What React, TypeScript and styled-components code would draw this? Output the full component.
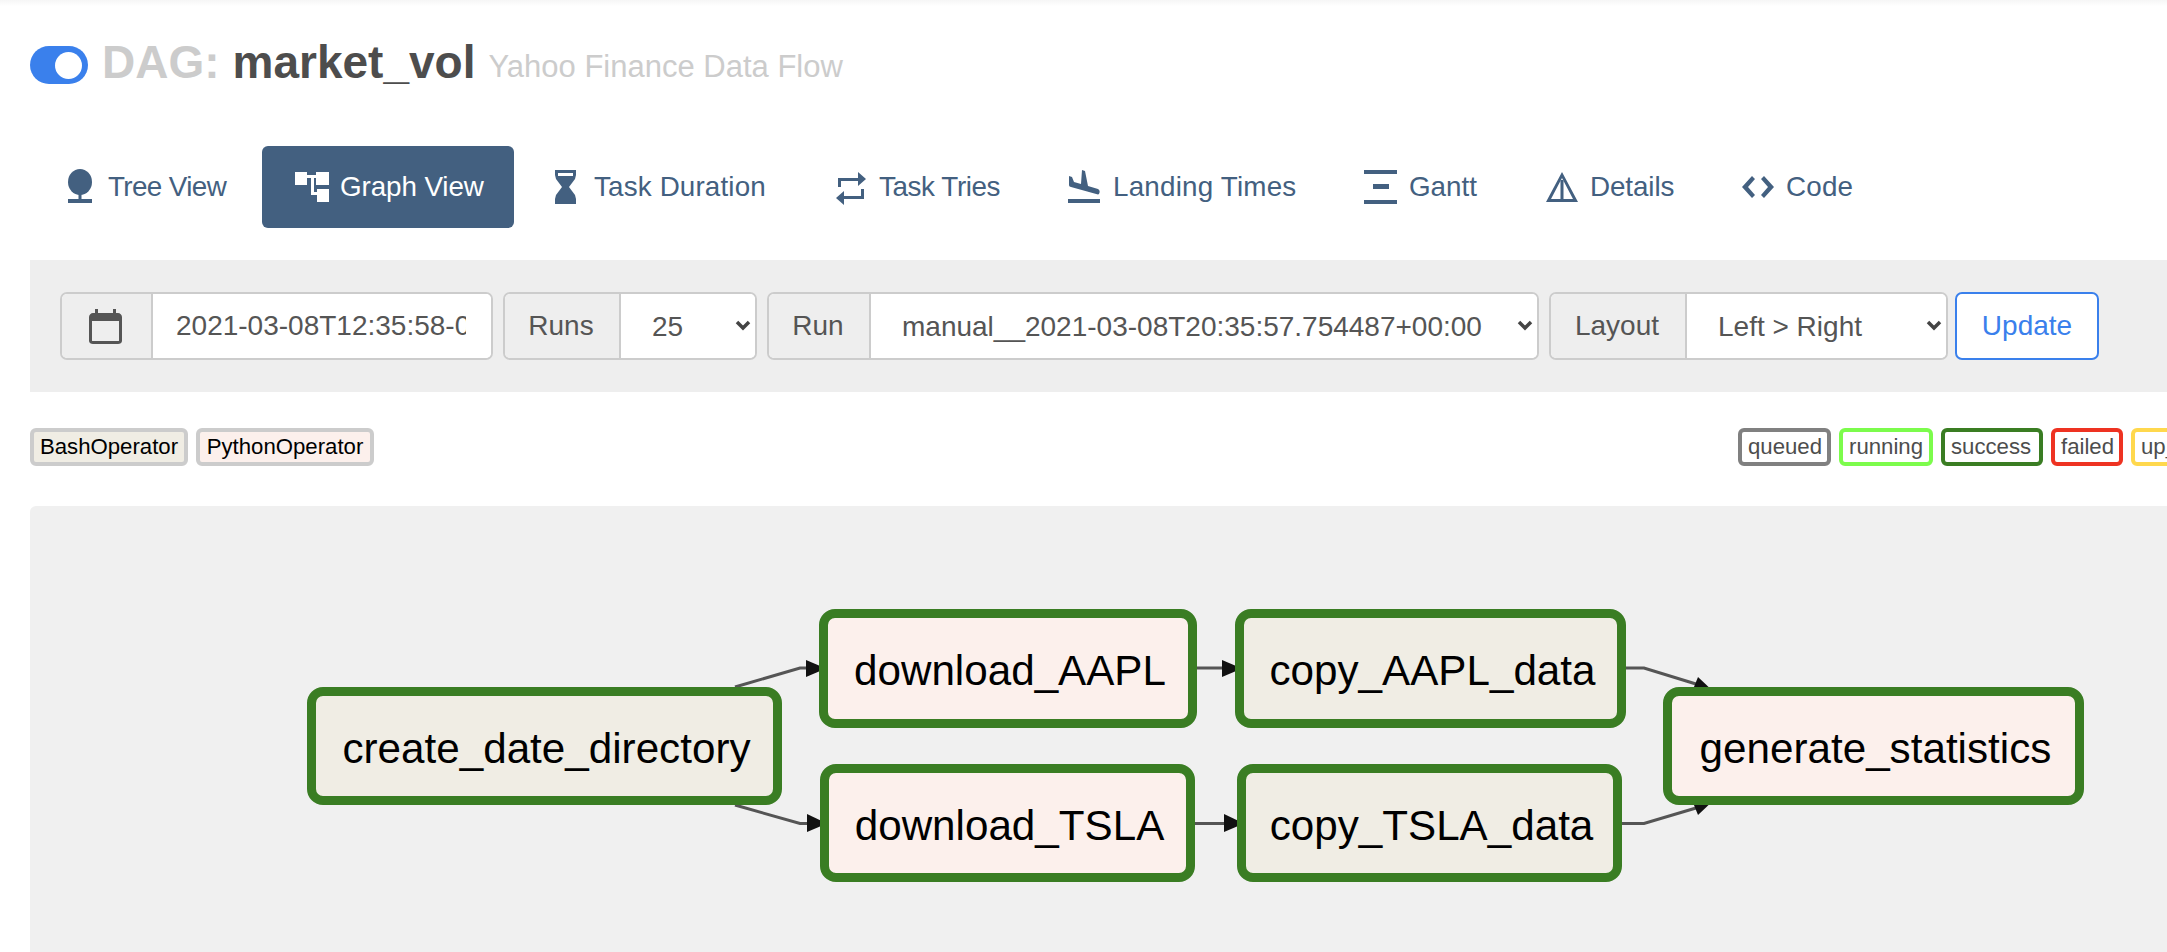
import React from "react";
import styled, { createGlobalStyle } from "styled-components";

const Global = createGlobalStyle`
  html, body { margin: 0; padding: 0; background: #fff; overflow: hidden; }
  body { font-family: "Liberation Sans", Arial, sans-serif; }
  #root { width: 2167px; height: 952px; overflow: hidden; }
`;

const Page = styled.div`
  width: 2167px;
  height: 952px;
  box-sizing: border-box;
  padding: 46px 0 0 30px;
  overflow: hidden;
  display: flex;
  flex-direction: column;
  background: linear-gradient(#f6f6f6 0, #fff 6px);
`;

const TitleRow = styled.div`
  display: flex;
  align-items: center;
  height: 38px;
`;
const Toggle = styled.span`
  width: 58px;
  height: 38px;
  border-radius: 19px;
  background: #3a80ec;
  display: flex;
  align-items: center;
  justify-content: flex-end;
  padding-right: 6px;
  box-sizing: border-box;
  margin-right: 14px;
`;
const Knob = styled.span`
  width: 27px;
  height: 27px;
  border-radius: 50%;
  background: #fff;
`;
const DagLabel = styled.span`
  font-size: 46px;
  font-weight: 700;
  color: #cccccc;
  margin-right: 13px;
  padding-bottom: 6px;
`;
const DagName = styled.span`
  font-size: 46px;
  font-weight: 700;
  color: #4d4d4d;
  margin-right: 13px;
  padding-bottom: 6px;
`;
const DagDesc = styled.span`
  font-size: 31px;
  color: #cccccc;
  position: relative;
  top: 2px;
`;

const Nav = styled.nav`
  display: flex;
  gap: 2px;
  margin-top: 62px;
  height: 82px;
`;
const NavItem = styled.a<{ $active?: boolean; $w: number; $ls: number }>`
  display: flex;
  align-items: center;
  gap: 11px;
  width: ${(p) => p.$w}px;
  box-sizing: border-box;
  padding-left: 33px;
  border-radius: 6px;
  font-size: 27.8px;
  letter-spacing: ${(p) => p.$ls}px;
  white-space: nowrap;
  background: ${(p) => (p.$active ? "#436080" : "transparent")};
  color: ${(p) => (p.$active ? "#fff" : "#436080")};
  svg { width: 34px; height: 36px; flex: none; fill: currentColor; }
`;

const Toolbar = styled.div`
  display: flex;
  align-items: center;
  gap: 10px;
  margin-top: 32px;
  height: 132px;
  padding-left: 30px;
  background: #eeeeee;
  flex: none;
`;
const Group = styled.div<{ $w: number }>`
  position: relative;
  display: flex;
  width: ${(p) => p.$w}px;
  height: 68px;
  box-sizing: border-box;
  border: 2px solid #cccccc;
  border-radius: 7px;
  background: #fff;
  overflow: hidden;
  flex: none;
`;
const Addon = styled.span<{ $w: number }>`
  width: ${(p) => p.$w}px;
  flex: none;
  box-sizing: border-box;
  background: #eeeeee;
  border-right: 2px solid #cccccc;
  padding-right: 2px;
  display: flex;
  align-items: center;
  justify-content: center;
  font-size: 28px;
  color: #555555;
`;
const DateInput = styled.input`
  flex: 1;
  min-width: 0;
  border: 0;
  outline: 0;
  background: #fff;
  padding: 0 25px 0 23px;
  font: 28px "Liberation Sans", Arial, sans-serif;
  color: #555555;
`;
const Select = styled.select<{ $pl: number }>`
  flex: 1;
  min-width: 0;
  border: 0;
  outline: 0;
  background: #fff;
  appearance: none;
  padding: 0 0 0 ${(p) => p.$pl}px;
  font: 28px "Liberation Sans", Arial, sans-serif;
  color: #555555;
`;
const Chevron = styled.svg`
  position: absolute;
  right: 4px;
  top: 25px;
  width: 16px;
  height: 13px;
  pointer-events: none;
`;
const UpdateButton = styled.button`
  width: 144px;
  height: 68px;
  margin-left: -3px;
  box-sizing: border-box;
  border: 2px solid #3a80ec;
  border-radius: 7px;
  background: #fff;
  color: #3a80ec;
  font: 28px "Liberation Sans", Arial, sans-serif;
  padding: 0;
  flex: none;
`;

const LegendRow = styled.div`
  display: flex;
  justify-content: space-between;
  margin-top: 36px;
  height: 38px;
  flex: none;
`;
const LegendGroup = styled.div`
  display: flex;
  gap: 8px;
`;
const StateGroup = styled(LegendGroup)`
  width: 429px;
  flex: none;
  overflow: hidden;
`;
const OpChip = styled.span<{ $bg: string; $w: number }>`
  width: ${(p) => p.$w}px;
  box-sizing: border-box;
  border: 4px solid #cccccc;
  border-radius: 6px;
  background: ${(p) => p.$bg};
  color: #000;
  font-size: 22.2px;
  display: flex;
  align-items: center;
  justify-content: center;
  white-space: nowrap;
`;
const StateChip = styled.span<{ $c: string; $w: number }>`
  width: ${(p) => p.$w}px;
  flex: none;
  box-sizing: border-box;
  border: 4px solid ${(p) => p.$c};
  border-radius: 6px;
  background: #fff;
  color: #4d4d4d;
  font-size: 22.2px;
  display: flex;
  align-items: center;
  padding-left: 6px;
  white-space: nowrap;
  overflow: hidden;
`;

const Canvas = styled.div`
  position: relative;
  margin-top: 40px;
  flex: 1;
  background: #f0f0f0;
  border-top-left-radius: 6px;
`;
const Edges = styled.svg`
  position: absolute;
  left: -30px;
  top: -506px;
  width: 2167px;
  height: 952px;
`;
const Node = styled.div<{ $bg: string }>`
  position: absolute;
  box-sizing: border-box;
  border: 9px solid #3a7d23;
  border-radius: 16px;
  background: ${(p) => p.$bg};
  color: #000;
  font-size: 42.2px;
  display: flex;
  align-items: center;
  justify-content: center;
  white-space: nowrap;
  padding: 5px 0 0 4px;
`;

const BASH = "#f0ede4";
const PY = "#fcf0ec";

const TreeIcon = () => (
  <svg viewBox="0 0 34 36">
    <ellipse cx="17" cy="13" rx="12" ry="13" />
    <rect x="15.500" y="24" width="3" height="9" />
    <rect x="5" y="30" width="24" height="4" />
  </svg>
);
const GraphIcon = () => (
  <svg viewBox="0 0 34 36">
    <rect x="0" y="3" width="12" height="13" />
    <rect x="12" y="6" width="9" height="3" />
    <rect x="21" y="3" width="13" height="13" />
    <rect x="16" y="9" width="3" height="17" />
    <rect x="19" y="23" width="3" height="3" />
    <rect x="22" y="20" width="12" height="13" />
  </svg>
);
const HourglassIcon = () => (
  <svg viewBox="0 0 34 36">
    <path d="M6 1h21v5l-1 4-6 8 6 8 1 4v5H6v-5l1-4 6-8-6-8-1-4zM9 4v3h15V4z" fillRule="evenodd" />
  </svg>
);
const RetweetIcon = () => (
  <svg viewBox="0 0 34 36">
    <path d="M4 9h20V3l8 7-8 7v-5H7v6H4zM30 20v10H10v6l-8-7 8-7v5h17v-7z" />
  </svg>
);
const LandingIcon = () => (
  <svg viewBox="0 0 34 36">
    <path d="M14 1l3 1 3 15 10 3c2 1 2 3 1 5l-1 .5L3 18c-1 0-2-1-2-2V7l3 1 2 5 7 2z" />
    <rect x="0" y="30" width="32" height="4" />
  </svg>
);
const GanttIcon = () => (
  <svg viewBox="0 0 34 36">
    <rect x="0" y="1" width="33" height="4" />
    <rect x="9" y="15" width="16" height="5" />
    <rect x="0" y="31" width="33" height="4" />
  </svg>
);
const DetailsIcon = () => (
  <svg viewBox="0 0 34 36">
    <path d="M17 3l16 30H1zM17 9L6 30h9.500V11h3v19H28z" fillRule="evenodd" />
  </svg>
);
const CodeIcon = () => (
  <svg viewBox="0 0 34 36">
    <path d="M11 7l3 3-7 8 7 8-3 3-10-11zM23 7l10 11-10 11-3-3 7-8-7-8z" />
  </svg>
);
const CalendarIcon = () => (
  <svg width="34" height="36" viewBox="0 0 34 36" fill="#555555">
    <path d="M6 1h3v4h15V1h3v4h2c2 0 4 2 4 4v24c0 2-2 3-4 3H4c-2 0-4-1-4-3V9c0-2 2-4 4-4h2zM3 13v19c0 1 0 1 1 1h25c1 0 1 0 1-1V13z" fillRule="evenodd" />
  </svg>
);

const ChevronDown = () => (
  <Chevron viewBox="0 0 16 13">
    <path d="M2 3l6 6 6-6" fill="none" stroke="#444" strokeWidth="3.500" />
  </Chevron>
);

const navItems = [
  { label: "Tree View", icon: <TreeIcon />, w: 230, ls: -0.6 },
  { label: "Graph View", icon: <GraphIcon />, w: 252, ls: -0.1, active: true },
  { label: "Task Duration", icon: <HourglassIcon />, w: 283, ls: 0.15 },
  { label: "Task Tries", icon: <RetweetIcon />, w: 232, ls: -0.4 },
  { label: "Landing Times", icon: <LandingIcon />, w: 294, ls: 0.2 },
  { label: "Gantt", icon: <GanttIcon />, w: 179, ls: 0 },
  { label: "Details", icon: <DetailsIcon />, w: 194, ls: -0.1 },
  { label: "Code", icon: <CodeIcon />, w: 180, ls: 0.2 },
];

const states = [
  { t: "queued", c: "#808080", w: 93 },
  { t: "running", c: "#7cfc4c", w: 94 },
  { t: "success", c: "#3a7d23", w: 102 },
  { t: "failed", c: "#ee3322", w: 72 },
  { t: "up_for_retry", c: "#ffd84d", w: 140 },
];

const nodes = [
  { t: "create_date_directory", x: 307, y: 687, w: 475, h: 118, bg: BASH },
  { t: "download_AAPL", x: 819, y: 609, w: 378, h: 119, bg: PY },
  { t: "download_TSLA", x: 820, y: 764, w: 375, h: 118, bg: PY },
  { t: "copy_AAPL_data", x: 1235, y: 609, w: 391, h: 119, bg: BASH },
  { t: "copy_TSLA_data", x: 1237, y: 764, w: 385, h: 118, bg: BASH },
  { t: "generate_statistics", x: 1663, y: 687, w: 421, h: 118, bg: PY },
];

const edges = [
  "M735 687L800 668L808 668",
  "M735 805L800 823.500L808 823.500",
  "M1197 668L1224 668",
  "M1195 823.500L1226 823.500",
  "M1626 668L1644 668L1696 684",
  "M1622 823.500L1644 823.500L1696 808",
];
const arrows = [
  "M806 660L826 668.500L806 677z",
  "M807 814L827 823.500L807 832z",
  "M1222 660L1242 668.500L1222 677z",
  "M1224 814L1244 823.500L1224 832z",
  "M1698 677L1716 694L1692 692z",
  "M1692 800L1716 798L1698 815z",
];

export default function App() {
  return (
    <Page>
      <Global />
      <TitleRow>
        <Toggle><Knob /></Toggle>
        <DagLabel>DAG:</DagLabel>
        <DagName>market_vol</DagName>
        <DagDesc>Yahoo Finance Data Flow</DagDesc>
      </TitleRow>
      <Nav>
        {navItems.map((n) => (
          <NavItem key={n.label} $active={n.active} $w={n.w} $ls={n.ls}>
            {n.icon}
            {n.label}
          </NavItem>
        ))}
      </Nav>
      <Toolbar>
        <Group $w={433}>
          <Addon $w={91}><CalendarIcon /></Addon>
          <DateInput readOnly value="2021-03-08T12:35:58-08:00" />
        </Group>
        <Group $w={254}>
          <Addon $w={116}>Runs</Addon>
          <Select $pl={31} defaultValue="25"><option>25</option></Select>
          <ChevronDown />
        </Group>
        <Group $w={772}>
          <Addon $w={102}>Run</Addon>
          <Select $pl={31}><option>manual__2021-03-08T20:35:57.754487+00:00</option></Select>
          <ChevronDown />
        </Group>
        <Group $w={399}>
          <Addon $w={136}>Layout</Addon>
          <Select $pl={31}><option>Left &gt; Right</option></Select>
          <ChevronDown />
        </Group>
        <UpdateButton>Update</UpdateButton>
      </Toolbar>
      <LegendRow>
        <LegendGroup>
          <OpChip $bg={BASH} $w={158}>BashOperator</OpChip>
          <OpChip $bg={PY} $w={178}>PythonOperator</OpChip>
        </LegendGroup>
        <StateGroup>
          {states.map((s) => (
            <StateChip key={s.t} $c={s.c} $w={s.w}>{s.t}</StateChip>
          ))}
        </StateGroup>
      </LegendRow>
      <Canvas>
        <Edges viewBox="0 0 2167 952">
          {edges.map((d) => (
            <path key={d} d={d} fill="none" stroke="#555" strokeWidth="3" />
          ))}
          {arrows.map((d) => (
            <path key={d} d={d} fill="#111" />
          ))}
        </Edges>
        {nodes.map((n) => (
          <Node
            key={n.t}
            $bg={n.bg}
            style={{ left: n.x - 30, top: n.y - 506, width: n.w, height: n.h }}
          >
            {n.t}
          </Node>
        ))}
      </Canvas>
    </Page>
  );
}
